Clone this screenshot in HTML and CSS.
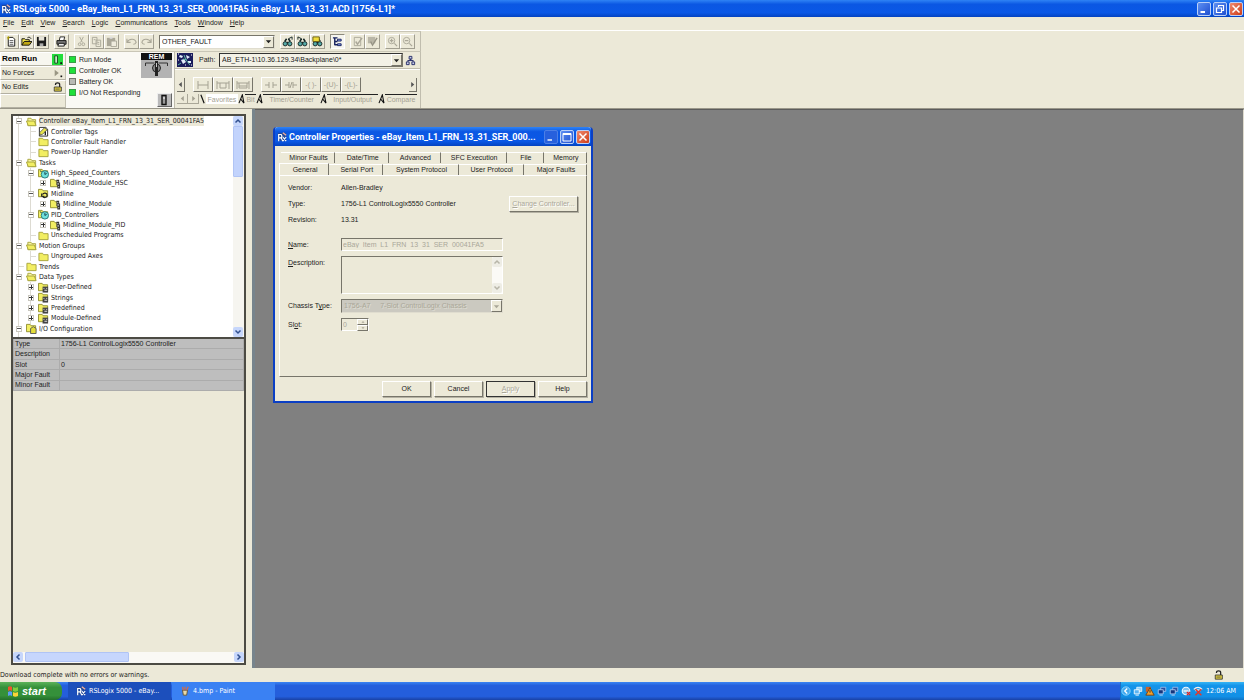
FILE: index.html
```html
<!DOCTYPE html>
<html lang="en">
<head>
<meta charset="utf-8">
<title>RSLogix 5000</title>
<link rel="stylesheet" href="styles.css">
</head>
<body>
<svg class="defs" aria-hidden="true">
  <symbol id="app" viewBox="0 0 12 12"><rect x="1" y="1" width="10" height="10" fill="#234a9a"/><path d="M2 11V3h3l1 2-1 2-3 0M5 7l2 4M7 6l4 5M11 6l-4 5" stroke="#fff" stroke-width="1.4" fill="none"/><path d="M7 1l4 3" stroke="#f0b0a0" stroke-width="1.6"/></symbol>
  <symbol id="folder" viewBox="0 0 12 12"><path d="M1 10.500V2.500h4l1 1.500h5v6.500z" fill="#f2ee62" stroke="#a5a23c"/></symbol>
  <symbol id="open" viewBox="0 0 12 12"><path d="M2 10.500V2.500h3.500l1 1.500h4v6.500z" fill="#f8f4a0" stroke="#a5a23c"/><path d="M2.500 10.500L.5 5.500h8.500l2 5z" fill="#f2ee62" stroke="#a5a23c"/></symbol>
  <symbol id="tags" viewBox="0 0 12 12"><path d="M1.500 1.500h7l2 2v7.500h-9z" fill="#fff" stroke="#222"/><path d="M2 10V7l5-5 3 2-5 5z" fill="#e8e64c" stroke="#444" stroke-width=".8"/><path d="M8 6v4" stroke="#222" stroke-width="1.500"/></symbol>
  <symbol id="clock" viewBox="0 0 12 12"><path d="M.5 9.500v-8h4l1 1.500h5v6.500z" fill="#f2ee62" stroke="#8f8c2c"/><circle cx="7.500" cy="7" r="4" fill="#6fe0dc" stroke="#25777c"/><path d="M7.500 4.500V7l2-1M4 4L2 3" stroke="#134" fill="none"/></symbol>
  <symbol id="loop" viewBox="0 0 12 12"><path d="M.5 9.500v-8h4l1 1.500h5v6.500z" fill="#f2ee62" stroke="#8f8c2c"/><path d="M5 7c1-2 5-2 5 1s-4 3-5 1M4 6v3h3" stroke="#222" stroke-width="1.300" fill="none"/></symbol>
  <symbol id="prog" viewBox="0 0 12 12"><path d="M.5 9.500v-8h4l1 1.500h3v6.500z" fill="#f2ee62" stroke="#8f8c2c"/><path d="M7 2h3v3h1v6.500H8V8H7z" fill="#333"/><path d="M8 4h1M8 6.500h2M9 9.500h1" stroke="#fff"/></symbol>
  <symbol id="types" viewBox="0 0 12 12"><path d="M.5 9.500v-8h4l1 1.500h5v6.500z" fill="#f2ee62" stroke="#8f8c2c"/><path d="M5 5h6v6.500H5z" fill="#444"/><path d="M6 7h1M9 7h1M7 9h3" stroke="#eee"/></symbol>
  <symbol id="io" viewBox="0 0 12 12"><path d="M.5 9.500v-8h4l1 1.500h5v6.500z" fill="#f2ee62" stroke="#8f8c2c"/><path d="M5 11.500V6l3-2 3 2v5.500z" fill="#e4dd38" stroke="#555"/></symbol>
  <symbol id="new" viewBox="0 0 12 12"><path d="M2.500 1.500h5l2 2v7.500h-7z" fill="#fff" stroke="#111"/><path d="M4 5h4M4 7h4M4 9h4" stroke="#555"/><path d="M1 2h3M2.500 0v4" stroke="#b5a400"/></symbol>
  <symbol id="fopen" viewBox="0 0 12 12"><path d="M1 10V3h3l1 1h4v2" fill="#f0e24a" stroke="#111"/><path d="M1 10l2.500-4H12l-3 4z" fill="#c0a814" stroke="#111"/><path d="M7 2c1-1 3-1 4 1" stroke="#111" fill="none"/></symbol>
  <symbol id="save" viewBox="0 0 12 12"><path d="M1 1h10v10H1z" fill="#1c1c1c"/><path d="M3 1h6v4H3z" fill="#e5e3d8"/><path d="M4 8h4v3H4z" fill="#aaa"/></symbol>
  <symbol id="print" viewBox="0 0 12 12"><path d="M3.500 5l1-4h5l-1 4" fill="#fff" stroke="#222"/><path d="M1 5h10v4H1z" fill="#777" stroke="#111"/><path d="M3 8h6v3H2z" fill="#eee" stroke="#111"/></symbol>
  <symbol id="cut" viewBox="0 0 12 12"><path d="M4 1l3 6M8 1L5 7" stroke="#aaa798" fill="none"/><circle cx="4" cy="9" r="1.500" fill="none" stroke="#aaa798"/><circle cx="8" cy="9" r="1.500" fill="none" stroke="#aaa798"/></symbol>
  <symbol id="copy" viewBox="0 0 12 12"><path d="M1.500 1.500h5v7h-5zM5.500 4.500h5v7h-5zM7 7h2M7 9h2M3 4h2" stroke="#aaa798" fill="none"/></symbol>
  <symbol id="paste" viewBox="0 0 12 12"><path d="M1 2h9v9H1z" fill="#aaa798"/><path d="M5.500 5.500h6v6h-6z" stroke="#aaa798" fill="#eeebdd"/><path d="M4 1h3v2H4z" fill="#ddd"/></symbol>
  <symbol id="undo" viewBox="0 0 12 12"><path d="M1 3v4h4M1 7c2-4 9-5 10 0-1 2-2 2-3 2" stroke="#aaa798" stroke-width="1.200" fill="none"/></symbol>
  <symbol id="redo" viewBox="0 0 12 12"><path d="M11 3v4H7M11 7C9 3 2 2 1 7c1 2 2 2 3 2" stroke="#aaa798" stroke-width="1.200" fill="none"/></symbol>
  <symbol id="find" viewBox="0 0 12 12"><circle cx="3.500" cy="8.500" r="2.300" fill="#55aaa8" stroke="#122"/><circle cx="8.500" cy="8.500" r="2.300" fill="#55aaa8" stroke="#122"/><path d="M3 6l2-3M9 6L7 3M5.500 7h1" stroke="#122" stroke-width="1.600"/></symbol>
  <symbol id="find1" viewBox="0 0 12 12"><use href="#find"/><path d="M7 3l4-2v3" stroke="#122" fill="none"/></symbol>
  <symbol id="find2" viewBox="0 0 12 12"><use href="#find"/><path d="M1 1l4 2M1 1v3" stroke="#122" fill="none"/></symbol>
  <symbol id="find3" viewBox="0 0 12 12"><use href="#find"/><path d="M1 1h7v5H1z" fill="#f0dc3c" stroke="#665c10"/></symbol>
  <symbol id="org" viewBox="0 0 12 12"><path d="M1 2h5M3 2v8M3 6h3M3 9.500h3" stroke="#15205e" stroke-width="1.500"/><path d="M6 3.500h4v2H6zM6 8.500h4v2H6z" fill="#8aa0ea" stroke="#15205e"/></symbol>
  <symbol id="ver" viewBox="0 0 12 12"><path d="M2.500 1.500h7v9h-7z" fill="none" stroke="#aaa798"/><path d="M4 6l2 3 5-7" stroke="#aaa798" stroke-width="1.500" fill="none"/></symbol>
  <symbol id="ver2" viewBox="0 0 12 12"><path d="M1 1h8v7H1z" fill="#b9b6a7"/><path d="M4 6l2 4 5-8" stroke="#969385" stroke-width="1.500" fill="none"/></symbol>
  <symbol id="zin" viewBox="0 0 12 12"><circle cx="5" cy="5" r="3.500" fill="none" stroke="#aaa798"/><path d="M3 5h4M5 3v4M8 8l3 3" stroke="#aaa798" stroke-width="1.300"/></symbol>
  <symbol id="zout" viewBox="0 0 12 12"><circle cx="5" cy="5" r="3.500" fill="none" stroke="#aaa798"/><path d="M3 5h4M8 8l3 3" stroke="#aaa798" stroke-width="1.300"/></symbol>
  <symbol id="lock" viewBox="0 0 12 12"><path d="M3 3.500V3q0-2 2.500-2T8 3v3" stroke="#222" stroke-width="1.500" fill="none"/><path d="M1.500 6h8.500v5H1.500z" fill="#e0cd3c" stroke="#333"/><path d="M3 8.500h5" stroke="#554"/></symbol>
  <symbol id="net" viewBox="0 0 12 12"><path d="M4.500 1.500h3v3h-3zM1.500 7.500h3v3h-3zM7.500 7.500h3v3h-3zM6 4v2M3 7V6h6v1" stroke="#222a66" fill="#c8cde8"/></symbol>
  <symbol id="up" viewBox="0 0 8 8"><path d="M1.500 5.500L4 3l2.500 2.500" stroke="currentColor" stroke-width="1.500" fill="none"/></symbol>
  <symbol id="down" viewBox="0 0 8 8"><path d="M1.500 2.500L4 5l2.500-2.500" stroke="currentColor" stroke-width="1.500" fill="none"/></symbol>
  <symbol id="lt" viewBox="0 0 8 8"><path d="M5.500 1.500L3 4l2.500 2.500" stroke="currentColor" stroke-width="1.500" fill="none"/></symbol>
  <symbol id="rt" viewBox="0 0 8 8"><path d="M2.500 1.500L5 4 2.500 6.500" stroke="currentColor" stroke-width="1.500" fill="none"/></symbol>
  <symbol id="tdown" viewBox="0 0 8 8"><path d="M1 2.500h6L4 6z" fill="currentColor"/></symbol>
  <symbol id="tup" viewBox="0 0 8 8"><path d="M1 5.500h6L4 2z" fill="currentColor"/></symbol>
  <symbol id="tleft" viewBox="0 0 8 8"><path d="M5.500 1v6L2 4z" fill="currentColor"/></symbol>
  <symbol id="tright" viewBox="0 0 8 8"><path d="M2.500 1v6L6 4z" fill="currentColor"/></symbol>
  <symbol id="slash" viewBox="0 0 8 12"><path d="M1 11L5 1l2 10M3 6l4 5" stroke="#111" stroke-width="1.300" fill="none"/></symbol>
  <symbol id="min" viewBox="0 0 12 12"><path d="M2.500 9h4.500" stroke="#fff" stroke-width="2"/></symbol>
  <symbol id="max" viewBox="0 0 12 12"><path d="M2 2.500h8v7.500H2z" stroke="#fff" fill="none"/><path d="M2 3h8" stroke="#fff" stroke-width="2"/></symbol>
  <symbol id="restore" viewBox="0 0 12 12"><path d="M4.500 4V2.500h5v5H8M2.500 5h5v4.500h-5z" stroke="#fff" stroke-width="1.200" fill="none"/></symbol>
  <symbol id="close" viewBox="0 0 12 12"><path d="M2.500 2.500l7 7M9.500 2.500l-7 7" stroke="#fff" stroke-width="1.500"/></symbol>
  <symbol id="pcs" viewBox="0 0 12 12"><path d="M4.500 1.500h6v5h-6z" fill="#2a4f9e" stroke="#9dc1ef"/><path d="M1.500 4.500h6v5h-6z" fill="#16357c" stroke="#b7d3f5"/><path d="M3 11h4" stroke="#b7d3f5"/></symbol>
  <symbol id="pcs2" viewBox="0 0 12 12"><path d="M4.500 1.500h6v5h-6z" fill="#8fd2fb" stroke="#e8f6ff"/><path d="M1.500 4.500h6v5h-6z" fill="#5ab4f3" stroke="#fff"/><path d="M3 11h4" stroke="#fff"/></symbol>
</svg>

<header class="titlebar">
  <svg class="i10"><use href="#app"/></svg>
  <h1 class="title">RSLogix 5000 - eBay_Item_L1_FRN_13_31_SER_00041FA5 in eBay_L1A_13_31.ACD [1756-L1]*</h1>
  <button class="cap" aria-label="Minimize"><svg><use href="#min"/></svg></button>
  <button class="cap" aria-label="Restore"><svg><use href="#restore"/></svg></button>
  <button class="cap red" aria-label="Close"><svg><use href="#close"/></svg></button>
</header>

<nav class="menu">
  <button><u>F</u>ile</button><button><u>E</u>dit</button><button><u>V</u>iew</button><button><u>S</u>earch</button><button><u>L</u>ogic</button><button><u>C</u>ommunications</button><button><u>T</u>ools</button><button><u>W</u>indow</button><button><u>H</u>elp</button>
</nav>

<div class="bars">
  <div class="toolbar">
    <div class="grp"><button class="tb" aria-label="New"><svg><use href="#new"/></svg></button><button class="tb" aria-label="Open"><svg><use href="#fopen"/></svg></button><button class="tb" aria-label="Save"><svg><use href="#save"/></svg></button></div>
    <div class="grp"><button class="tb" aria-label="Print"><svg><use href="#print"/></svg></button></div>
    <div class="grp"><button class="tb" aria-label="Cut"><svg><use href="#cut"/></svg></button><button class="tb" aria-label="Copy"><svg><use href="#copy"/></svg></button><button class="tb" aria-label="Paste"><svg><use href="#paste"/></svg></button></div>
    <div class="grp"><button class="tb" aria-label="Undo"><svg><use href="#undo"/></svg></button><button class="tb" aria-label="Redo"><svg><use href="#redo"/></svg></button></div>
    <div class="combo tagcombo"><select aria-label="Find tag"><option>OTHER_FAULT</option></select><span class="drop"><svg><use href="#tdown"/></svg></span></div>
    <div class="grp"><button class="tb" aria-label="Find previous"><svg><use href="#find1"/></svg></button><button class="tb" aria-label="Find next"><svg><use href="#find2"/></svg></button><button class="tb" aria-label="Find all"><svg><use href="#find3"/></svg></button></div>
    <div class="grp"><button class="tb on" aria-label="Organizer"><svg><use href="#org"/></svg></button></div>
    <div class="grp"><button class="tb" aria-label="Verify routine"><svg><use href="#ver"/></svg></button><button class="tb" aria-label="Verify controller"><svg><use href="#ver2"/></svg></button></div>
    <div class="grp"><button class="tb" aria-label="Zoom in"><svg><use href="#zin"/></svg></button><button class="tb" aria-label="Zoom out"><svg><use href="#zout"/></svg></button></div>
  </div>
  <div class="online">
    <div class="modes">
      <div class="mode hot"><span>Rem Run</span><button class="key" aria-label="Mode menu"><svg viewBox="0 0 12 12"><path d="M3 2h3v8H3z" fill="#c8e8c8" stroke="#154a1c"/><path d="M9 9h2v2H9z" fill="#111"/></svg></button></div>
      <div class="mode"><span>No Forces</span><svg class="i10" viewBox="0 0 12 12"><path d="M2 2l5 4-5 4z" fill="#999684"/><path d="M9 9h2v2H9z" fill="#111"/></svg></div>
      <div class="mode"><span>No Edits</span><svg class="i10"><use href="#lock"/></svg></div>
      <div class="mode"></div>
    </div>
    <div class="leds">
      <ul class="ledlist"><li><i class="led"></i>Run Mode</li><li><i class="led"></i>Controller OK</li><li><i class="led off"></i>Battery OK</li><li><i class="led"></i>I/O Not Responding</li></ul>
      <div class="keyside">
        <div class="keypic"><span>REM</span><svg viewBox="0 0 30 18"><path d="M4 6V3h9M17 3h9v3" stroke="#333" fill="none"/><circle cx="15" cy="8" r="4" fill="#8a8a8a" stroke="#222"/><path d="M15 1v15" stroke="#222" stroke-width="3"/><path d="M15 3v4" stroke="#ccc"/></svg></div>
        <button class="keybtn" aria-label="Controller"><svg viewBox="0 0 12 12"><path d="M4 1.500h4v9H4z" fill="#999" stroke="#111" stroke-width="1.400"/><path d="M5 4h2" stroke="#fff"/></svg></button>
      </div>
    </div>
    <div class="path">
      <div class="pathrow">
        <svg class="logo" viewBox="0 0 16 14"><path d="M0 0h16v14H0z" fill="#1a1c5c"/><path d="M3 2l3 1-1 2-3-1zM9 2l4 2-3 2zM4 7l3-1 2 3-3 2zM11 8h3v2h-3z" fill="#e4eefa"/><path d="M7 2l2 5 4 5M1 12l3-2M6 6l4 1" stroke="#5fb6a4" fill="none"/><path d="M14 12h1M1 1h1M8 12h1M1 7h1M14 2h1" stroke="#fff"/></svg>
        <label for="path">Path:</label>
        <div class="combo pathcombo"><select id="path"><option>AB_ETH-1\10.36.129.34\Backplane\0*</option></select><span class="drop"><svg><use href="#tdown"/></svg></span></div>
        <button class="flat" aria-label="Who active"><svg><use href="#net"/></svg></button>
      </div>
      <div class="instr">
        <div class="insrow">
          <button class="arr" aria-label="Scroll left"><svg><use href="#tleft"/></svg></button>
          <div class="ins"><button class="op" aria-label="Rung"><svg viewBox="0 0 14 10"><path d="M2 1v8M12 1v8M2 5h10"/></svg></button><button class="op" aria-label="Branch"><svg viewBox="0 0 14 10"><path d="M1 1v8M13 1v8M1 3h12M4 3v5h6V3"/></svg></button><button class="op" aria-label="Branch level"><svg viewBox="0 0 14 10"><path d="M1 1v8M13 1v8M1 3h12M3 3v5h8V3M3 6h8"/></svg></button></div>
          <div class="ins"><button class="op" aria-label="Examine on"><svg viewBox="0 0 14 10"><path d="M1 5h4M5 2v6M9 2v6M9 5h4"/></svg></button><button class="op" aria-label="Examine off"><svg viewBox="0 0 14 10"><path d="M1 5h4M5 2v6M9 2v6M9 5h4M6 8l2-6"/></svg></button><button class="op">-( )-</button><button class="op">-(U)-</button><button class="op">-(L)-</button></div>
          <button class="arr last" aria-label="Scroll right"><svg><use href="#tright"/></svg></button>
        </div>
        <div class="instabs">
          <button class="mini" aria-label="Previous tab"><svg><use href="#tleft"/></svg></button><button class="mini" aria-label="Next tab"><svg><use href="#tright"/></svg></button>
          <svg class="sl first" viewBox="0 0 6 12"><path d="M1 1l4 10" stroke="#111" stroke-width="1.400"/></svg><button class="it cur">Favorites</button><svg class="sl"><use href="#slash"/></svg><button class="it">Bit</button><svg class="sl"><use href="#slash"/></svg><button class="it wide">Timer/Counter</button><svg class="sl"><use href="#slash"/></svg><button class="it wide">Input/Output</button><svg class="sl"><use href="#slash"/></svg><button class="it">Compare</button>
        </div>
      </div>
    </div>
  </div>
</div>

<main class="work">
  <aside class="side">
    <div class="organizer">
      <div class="treebox">
        <ul class="tree">
          <li class="d0"><button class="ex" aria-label="Collapse"></button><svg><use href="#open"/></svg><span class="sel">Controller eBay_Item_L1_FRN_13_31_SER_00041FA5</span></li>
          <li class="d1"><i class="st"></i><svg><use href="#tags"/></svg><span>Controller Tags</span></li>
          <li class="d1"><i class="st"></i><svg><use href="#folder"/></svg><span>Controller Fault Handler</span></li>
          <li class="d1"><i class="st"></i><svg><use href="#folder"/></svg><span>Power-Up Handler</span></li>
          <li class="d0"><button class="ex" aria-label="Collapse"></button><svg><use href="#open"/></svg><span>Tasks</span></li>
          <li class="d1"><button class="ex" aria-label="Collapse"></button><svg><use href="#clock"/></svg><span>High_Speed_Counters</span></li>
          <li class="d2"><button class="ex plus" aria-label="Expand"></button><svg><use href="#prog"/></svg><span>Midline_Module_HSC</span></li>
          <li class="d1"><button class="ex" aria-label="Collapse"></button><svg><use href="#loop"/></svg><span>Midline</span></li>
          <li class="d2"><button class="ex plus" aria-label="Expand"></button><svg><use href="#prog"/></svg><span>Midline_Module</span></li>
          <li class="d1"><button class="ex" aria-label="Collapse"></button><svg><use href="#clock"/></svg><span>PID_Controllers</span></li>
          <li class="d2"><button class="ex plus" aria-label="Expand"></button><svg><use href="#prog"/></svg><span>Midline_Module_PID</span></li>
          <li class="d1"><i class="st"></i><svg><use href="#folder"/></svg><span>Unscheduled Programs</span></li>
          <li class="d0"><button class="ex" aria-label="Collapse"></button><svg><use href="#open"/></svg><span>Motion Groups</span></li>
          <li class="d1"><i class="st"></i><svg><use href="#folder"/></svg><span>Ungrouped Axes</span></li>
          <li class="d0"><i class="st"></i><svg><use href="#folder"/></svg><span>Trends</span></li>
          <li class="d0"><button class="ex" aria-label="Collapse"></button><svg><use href="#open"/></svg><span>Data Types</span></li>
          <li class="d1"><button class="ex plus" aria-label="Expand"></button><svg><use href="#types"/></svg><span>User-Defined</span></li>
          <li class="d1"><button class="ex plus" aria-label="Expand"></button><svg><use href="#types"/></svg><span>Strings</span></li>
          <li class="d1"><button class="ex plus" aria-label="Expand"></button><svg><use href="#types"/></svg><span>Predefined</span></li>
          <li class="d1"><button class="ex plus" aria-label="Expand"></button><svg><use href="#types"/></svg><span>Module-Defined</span></li>
          <li class="d0"><button class="ex" aria-label="Collapse"></button><svg><use href="#io"/></svg><span>I/O Configuration</span></li>
        </ul>
        <div class="vbar"><button class="sb" aria-label="Up"><svg><use href="#up"/></svg></button><div class="vthumb"></div><button class="sb end" aria-label="Down"><svg><use href="#down"/></svg></button></div>
      </div>
      <table class="props">
        <tr><th>Type</th><td>1756-L1 ControlLogix5550 Controller</td></tr>
        <tr><th>Description</th><td></td></tr>
        <tr><th>Slot</th><td>0</td></tr>
        <tr><th>Major Fault</th><td></td></tr>
        <tr><th>Minor Fault</th><td></td></tr>
      </table>
      <div class="hbar"><button class="sb" aria-label="Left"><svg><use href="#lt"/></svg></button><div class="hthumb"></div><button class="sb end" aria-label="Right"><svg><use href="#rt"/></svg></button></div>
    </div>
  </aside>
  <section class="mdi">
    <form class="dialog" onsubmit="return false">
      <div class="dtitle">
        <svg class="i10"><use href="#app"/></svg>
        <h2 class="title">Controller Properties - eBay_Item_L1_FRN_13_31_SER_000...</h2>
        <button type="button" class="cap dim" aria-label="Minimize"><svg><use href="#min"/></svg></button>
        <button type="button" class="cap" aria-label="Maximize"><svg><use href="#max"/></svg></button>
        <button type="button" class="cap red" aria-label="Close"><svg><use href="#close"/></svg></button>
      </div>
      <div class="dbody">
        <div class="tabs back"><button type="button">Minor Faults</button><button type="button">Date/Time</button><button type="button">Advanced</button><button type="button">SFC Execution</button><button type="button">File</button><button type="button">Memory</button></div>
        <div class="tabs front"><button type="button" class="act">General</button><button type="button">Serial Port</button><button type="button">System Protocol</button><button type="button">User Protocol</button><button type="button">Major Faults</button></div>
        <div class="page">
          <div class="info">
            <dl class="facts"><dt>Vendor:</dt><dd>Allen-Bradley</dd><dt>Type:</dt><dd>1756-L1 ControlLogix5550 Controller</dd><dt>Revision:</dt><dd>13.31</dd></dl>
            <button type="button" class="btn chg" disabled><u>C</u>hange Controller...</button>
          </div>
          <div class="fields">
            <label for="nm"><u>N</u>ame:</label><input id="nm" class="inset" value="eBay_Item_L1_FRN_13_31_SER_00041FA5" disabled>
            <label for="ds"><u>D</u>escription:</label><div class="inset area"><textarea id="ds" disabled></textarea><div class="abar"><button type="button" class="sb" disabled aria-label="Up"><svg><use href="#up"/></svg></button><button type="button" class="sb" disabled aria-label="Down"><svg><use href="#down"/></svg></button></div></div>
            <label for="ch">Chassis T<u>y</u>pe:</label><div class="combo chcombo"><select id="ch" disabled><option>1756-A7 &nbsp; &nbsp; 7-Slot ControlLogix Chassis</option></select><span class="drop"><svg><use href="#tdown"/></svg></span></div>
            <label for="sl">Sl<u>o</u>t:</label><div class="inset spin"><input id="sl" value="0" disabled><div class="updown"><button type="button" disabled aria-label="Increase"><svg><use href="#tup"/></svg></button><button type="button" disabled aria-label="Decrease"><svg><use href="#tdown"/></svg></button></div></div>
          </div>
        </div>
        <div class="actions"><button type="button" class="btn">OK</button><button type="button" class="btn">Cancel</button><button type="button" class="btn def" disabled><u>A</u>pply</button><button type="button" class="btn">Help</button></div>
      </div>
    </form>
  </section>
</main>

<footer class="status"><span>Download complete with no errors or warnings.</span><svg class="i10"><use href="#lock"/></svg></footer>

<div class="taskbar">
  <button class="start"><svg viewBox="0 0 12 12"><path d="M1 2q2-1.500 4 0v4q-2-1.500-4 0z" fill="#f0552c"/><path d="M6 2q2 1.500 5 0v4q-3 1.500-5 0z" fill="#7fce3d"/><path d="M1 7q2-1.500 4 0v4q-2-1.500-4 0z" fill="#5b9cf5"/><path d="M6 7q2 1.500 5 0v4q-3 1.500-5 0z" fill="#fbd437"/></svg>start</button>
  <button class="task cur"><svg class="i10"><use href="#app"/></svg>RSLogix 5000 - eBay...</button>
  <button class="task"><svg class="i10" viewBox="0 0 12 12"><path d="M3 5h6l-1 6H4z" fill="#e8d9a8" stroke="#5a4a2a"/><path d="M4 5L3 1M6 5V1M8 5l2-4" stroke="#e06a3a" stroke-width="1.400"/></svg>4.bmp - Paint</button>
  <div class="tray">
    <svg viewBox="0 0 12 12"><circle cx="6" cy="6" r="5" fill="#3fa9ee" stroke="#9fdcff"/><path d="M7.500 3L4.500 6l3 3" stroke="#fff" stroke-width="1.600" fill="none"/></svg>
    <svg><use href="#pcs2"/></svg>
    <svg viewBox="0 0 12 12"><path d="M1 1h6v6H1z" fill="#c9622c"/><path d="M6 2l5 9H1z" fill="#f3a12c" stroke="#6a3a10"/><path d="M6 5v3" stroke="#222"/></svg>
    <svg><use href="#pcs"/></svg><svg><use href="#pcs"/></svg>
    <svg viewBox="0 0 12 12"><circle cx="6" cy="6" r="4.500" fill="#7cc0ee" stroke="#eef8ff" stroke-width="1.400"/><path d="M3 6h6" stroke="#fff" stroke-width="1.500"/><path d="M7 7l4 4M11 7l-4 4" stroke="#d22" stroke-width="1.500"/></svg>
    <svg viewBox="0 0 12 12"><path d="M1 4q5-5 10 0M3 6q3-3 6 0" stroke="#f3f3f3" stroke-width="1.500" fill="none"/><path d="M3 4l7 7M10 4l-7 7" stroke="#e33a2a" stroke-width="1.800"/></svg>
    <time>12:06 AM</time>
  </div>
</div>
</body>
</html>
```
FILE: styles.css
```css
:root {
  --face: #ece9d8;
}
* { box-sizing: border-box; }
body {
  margin: 0;
  height: 100vh;
  display: flex;
  flex-direction: column;
  background: var(--face);
  color: #222;
  font: 7px/10px "Liberation Sans", Arial, sans-serif;
  overflow: hidden;
}
button, input, select, textarea {
  font: inherit;
  color: inherit;
  margin: 0;
  padding: 0;
  border: 0;
  background: none;
  border-radius: 0;
  appearance: none;
  min-width: 0;
}
ul, dl, dd, h1, h2 { margin: 0; padding: 0; list-style: none; }
svg { display: block; flex: none; }
.defs { position: absolute; width: 0; height: 0; }
.i10 { width: 10px; height: 10px; }

/* Title bars */
.titlebar {
  display: flex;
  align-items: center;
  gap: 2px;
  height: 17px;
  flex: none;
  padding: 0 1px;
  background: linear-gradient(#2f83f5, #0b57e3 25%, #0a58e6 75%, #0443c0);
}
.title {
  flex: 1;
  min-width: 0;
  white-space: nowrap;
  color: #fff;
  font: bold 9px/14px Roboto, "Liberation Sans", Arial, sans-serif;
}
.cap {
  width: 14px;
  height: 14px;
  flex: none;
  border: 1px solid #b9d0f8;
  border-radius: 2px;
  background: linear-gradient(135deg, #5d8ff2, #1f4fd0);
}
.cap svg { width: 12px; height: 12px; }
.cap.red { background: linear-gradient(135deg, #ee8a70, #cf3d16); }
.cap.dim { border-color: #4c7fe6; background: #2760dd; }
.cap.dim svg { opacity: .7; }

.menu {
  display: flex;
  gap: 7px;
  height: 13px;
  flex: none;
  padding: 0 3px 1px;
  align-items: center;
}

/* Toolbars */
.bars {
  flex: none;
  border-top: 1px solid #fff;
  border-bottom: 1px solid #9a978a;
  display: flex;
  flex-direction: column;
  align-items: flex-start;
}
.toolbar {
  display: flex;
  align-items: center;
  gap: 5px;
  width: 421px;
  height: 21px;
  padding: 0 3px 0 4px;
  border-top: 1px solid #c9c6b6;
  border-right: 1px solid #c0bdae;
  border-bottom: 1px solid #c9c6b6;
}
.grp { display: flex; }
.tb {
  width: 15px;
  height: 15px;
  padding: 1px;
  border: 1px solid;
  border-color: #fff #a19e90 #a19e90 #fff;
}
.tb svg { width: 11px; height: 11px; }
.tb.on { border-color: #8d8a7c #fff #fff #8d8a7c; background: #f6f5ee; }
.combo {
  display: flex;
  height: 14px;
  border: 1px solid;
  border-color: #77756a #e0ddcf #e0ddcf #77756a;
  background: #fff;
}
.combo select { flex: 1; padding: 0 2px; }
.drop {
  width: 11px;
  display: grid;
  place-items: center;
  border: 1px solid;
  border-color: #fff #77756a #77756a #fff;
  background: var(--face);
}
.drop svg { width: 7px; height: 7px; }
.tagcombo { width: 116px; }

.online { display: flex; width: 421px; height: 56px; border-right: 1px solid #c0bdae; }
.modes { width: 66px; display: grid; grid-template-rows: repeat(4, 1fr); }
.mode {
  display: flex;
  justify-content: space-between;
  align-items: center;
  padding: 0 2px 0 1px;
  border: 1px solid;
  border-color: #fff #c4c1b2 #b3b0a2 #fff;
}
.mode.hot { background: #f7f6ef; font-weight: bold; color: #000; font-size: 8px; }
.key { width: 11px; height: 11px; background: #22dd3c; }
.key svg { width: 11px; height: 11px; }
.leds {
  display: flex;
  justify-content: space-between;
  width: 109px;
  padding: 1px 2px 1px 3px;
  background: #faf9f4;
  border-right: 1px solid #c0bdae;
}
.ledlist { white-space: nowrap; width: 72px; padding-top: 1px; }
.ledlist li { display: flex; gap: 3px; align-items: center; height: 11px; }
.led { width: 7px; height: 7px; background: #1fe03a; border: 1px solid #3a9c46; }
.led.off { background: #b9b9b4; border-color: #77776f; }
.keyside { display: flex; flex-direction: column; justify-content: space-between; align-items: flex-end; }
.keypic { width: 31px; background: #b3b3b3; }
.keypic span { display: block; background: #111; color: #fff; text-align: center; font-weight: bold; line-height: 7px; }
.keypic svg { width: 31px; height: 18px; }
.keybtn { width: 15px; height: 14px; background: #b9b9b9; border: 1px solid; border-color: #eee #666 #666 #eee; }
.keybtn svg { width: 12px; height: 12px; }
.path { flex: 1; display: flex; flex-direction: column; min-width: 0; }
.pathrow { display: flex; align-items: center; height: 17px; padding: 0 2px; border-bottom: 1px solid #c0bdae; }
.logo { width: 16px; height: 14px; }
.pathrow label { width: 26px; padding-left: 6px; }
.pathcombo { flex: 1; background: #f3f1e6; border-color: #333 #77756a #77756a #333; }
.flat { padding: 2px; }
.flat svg { width: 11px; height: 11px; }
.instr { flex: 1; display: flex; flex-direction: column; justify-content: flex-end; gap: 2px; padding: 0 3px 4px 2px; border-top: 1px solid #fff; }
.insrow { display: flex; align-items: center; gap: 8px; }
.arr { width: 8px; height: 14px; border-right: 1px solid #77756a; border-bottom: 1px solid #77756a; color: #555; }
.arr svg { width: 7px; height: 7px; }
.arr.last { margin-left: auto; }
.ins { display: flex; }
.op {
  width: 20px;
  height: 15px;
  border: 1px solid;
  border-color: #fff #77756a #77756a #fff;
  color: #a5a293;
  white-space: nowrap;
}
.ins .op { display: grid; place-items: center; }
.op svg { width: 14px; height: 10px; stroke: #a5a293; fill: none; }
.instabs { display: flex; height: 10px; align-items: stretch; }
.mini { width: 11px; border-right: 1px solid #aaa798; border-bottom: 1px solid #aaa798; color: #a5a293; }
.mini svg { width: 7px; height: 7px; margin: 0 auto; }
.sl { width: 7px; height: 10px; }
.it { flex: 1 1 auto; line-height: 8px; color: #a5a293; border-top: 1px solid #222; }
.it.wide { flex-grow: 4; }
.it.cur { background: #fff; border-top-color: #fff; }

/* Work area */
.work { flex: 1; display: flex; min-height: 0; }
.side {
  width: 255px;
  flex: none;
  display: flex;
  padding: 5px 6px 3px 11px;
  border-right: 3px solid #77848c;
}
.organizer {
  flex: 1;
  display: flex;
  flex-direction: column;
  border: 2px solid #4c4b44;
  min-width: 0;
}
.treebox { display: flex; height: 221px; flex: none; background: #fff; }
.tree {
  flex: 1;
  display: grid;
  grid-auto-rows: minmax(0, 1fr);
  min-width: 0;
  padding-bottom: 3px;
  font-family: "DejaVu Sans Condensed", "DejaVu Sans", sans-serif;
  background: linear-gradient(#dddbd2, #dddbd2) 5px 0 / 1px 100% no-repeat;
}
.tree li { display: flex; align-items: center; gap: 2px; white-space: nowrap; padding-left: 3px; }
.tree li svg { width: 11px; height: 11px; }
.tree .d1 { padding-left: 15px; background: linear-gradient(#dddbd2, #dddbd2) 17px 0 / 1px 100% no-repeat; }
.tree .d2 { padding-left: 27px; background: linear-gradient(#dddbd2, #dddbd2) 17px 0 / 1px 100% no-repeat; }
.sel { background: var(--face); }
.ex {
  width: 6px;
  height: 6px;
  flex: none;
  margin-right: 2px;
  border: 1px solid #c8c6bd;
  background: linear-gradient(#555, #555) center / 4px 1px no-repeat #fff;
}
.ex.plus { background: linear-gradient(#333, #333) center / 4px 1px no-repeat, linear-gradient(#333, #333) center / 1px 4px no-repeat #fff; }
.st { width: 6px; height: 1px; margin: 0 0 0 2px; background: #dddbd2; }
.sb {
  display: grid;
  place-items: center;
  width: 10px;
  height: 10px;
  flex: none;
  border-radius: 2px;
  background: #c6d6fb;
  color: #31508f;
}
.sb svg { width: 8px; height: 8px; }
.sb:disabled { background: #eeede5; color: #b7b5a8; }
.vbar { width: 11px; display: flex; flex-direction: column; background: #f6f5f0; }
.vthumb { height: 51px; width: 10px; border-radius: 1px; background: #c2d3fc; border: 1px solid #b0c4f5; }
.end { margin-top: auto; }
.props {
  border-collapse: collapse;
  width: 100%;
  height: 54px;
  background: #bebebe;
  border-top: 2px solid #4c4b44;
  line-height: 8px;
}
.props th { width: 46px; text-align: left; font-weight: normal; }
.props th, .props td { padding: 0 1px; border: 1px solid #acacac; white-space: nowrap; }
.hbar { display: flex; margin-top: auto; height: 11px; background: #faf9f5; }
.hthumb { width: 45%; height: 10px; margin-left: 2px; border: 1px solid #b0c4f5; border-radius: 1px; background: #c6d6fd; }
.hbar .end { margin: 0 0 0 auto; }
.mdi {
  flex: 1;
  position: relative;
  background: #808080;
  border-top: 1px solid #5c5c5c;
  border-right: 1px solid #dedbce;
  min-width: 0;
}

/* Properties dialog */
.dialog {
  position: absolute;
  left: 18px;
  top: 17px;
  width: 320px;
  border: 2px solid #0b3fc4;
  border-top: 0;
  border-radius: 4px 4px 0 0;
  background: var(--face);
}
.dtitle {
  display: flex;
  align-items: center;
  gap: 2px;
  height: 19px;
  padding: 0 1px 0 2px;
  border-radius: 3px 3px 0 0;
  background: linear-gradient(#2f83f5, #0b57e3 25%, #0a58e6 75%, #0443c0);
}
.dbody { padding: 5px 4px 4px; }
.tabs { display: grid; height: 12px; }
.tabs.back { grid-template-columns: 54fr 54fr 51fr 66fr 37fr 43fr; padding-left: 2px; }
.tabs.front { grid-template-columns: 50fr 54fr 75fr 65fr 63fr; }
.tabs button { border-top: 1px solid #fff; border-right: 1px solid #77756a; padding-left: 2px; margin-top: 1px; }
.tabs .act { margin-top: 0; border-left: 1px solid #fff; }
.page {
  height: 202px;
  padding: 7px 8px;
  border: 1px solid;
  border-color: #fff #77756a #77756a #fff;
}
.info { display: flex; justify-content: space-between; align-items: center; }
.facts { display: grid; grid-template-columns: 53px auto; row-gap: 6px; }
.btn {
  height: 16px;
  border: 1px solid;
  border-color: #fff #77756a #77756a #fff;
  box-shadow: 1px 1px 0 #b5b2a4;
}
.btn:disabled { color: #aaa798; text-shadow: 1px 1px 0 #fff; }
.chg { width: 69px; }
.fields { display: grid; grid-template-columns: 53px 162px; row-gap: 5px; margin-top: 13px; align-items: start; }
.fields label { padding-top: 2px; }
.inset {
  border: 1px solid;
  border-color: #77756a #fff #fff #77756a;
  color: #aaa798;
}
.fields input.inset { height: 13px; padding: 0 1px; }
.area { display: flex; height: 38px; }
.area textarea { flex: 1; resize: none; }
.abar { width: 10px; display: flex; flex-direction: column; justify-content: space-between; background: #fbfaf6; }
.chcombo { color: #aaa798; background: #cbc9c0; }
.chcombo select { text-shadow: 1px 1px 0 #dedcd2; opacity: 1; }
.spin { display: flex; width: 28px; height: 13px; }
.spin input { flex: 1; padding: 0 1px; }
.updown { display: grid; grid-template-rows: 1fr 1fr; width: 11px; }
.updown button { display: grid; place-items: center; border: 1px solid; border-color: #fff #77756a #77756a #fff; }
.updown svg { width: 4px; height: 4px; }
.actions { display: grid; grid-template-columns: repeat(4, 49px); justify-content: end; gap: 3px; margin-top: 4px; }
.def { border-color: #333; }

/* Status and task bars */
.status {
  display: flex;
  justify-content: space-between;
  align-items: center;
  height: 14px;
  flex: none;
  padding-right: 20px;
  font-family: "DejaVu Sans Condensed", "DejaVu Sans", sans-serif;
}
.taskbar {
  display: flex;
  height: 18px;
  flex: none;
  color: #fff;
  font-family: "DejaVu Sans Condensed", "DejaVu Sans", sans-serif;
  background: linear-gradient(#3a84f2, #245edc 20%, #245edc 80%, #1941a5);
}
.start {
  display: flex;
  align-items: center;
  gap: 3px;
  width: 62px;
  padding-left: 7px;
  margin-right: 6px;
  border-radius: 0 7px 7px 0;
  background: linear-gradient(#5cb35a, #35903a 30%, #35903a 75%, #236f2a);
  font: italic bold 11px/16px "Liberation Sans", Arial, sans-serif;
}
.start svg { width: 12px; height: 12px; }
.task { display: flex; align-items: center; gap: 3px; width: 103px; padding-left: 8px; margin-right: 1px; background: #3a81f3; white-space: nowrap; }
.task.cur { background: #1c4fbc; }
.tray {
  display: flex;
  align-items: center;
  gap: 2px;
  margin-left: auto;
  padding: 0 8px 0 0;
  border-left: 1px solid #1b6fc6;
  background: linear-gradient(#35b4f4, #1394ea 20%, #1290e6 80%, #0f74c4);
}
.tray svg { width: 10px; height: 10px; }
.tray time { margin-left: 1px; }
```
